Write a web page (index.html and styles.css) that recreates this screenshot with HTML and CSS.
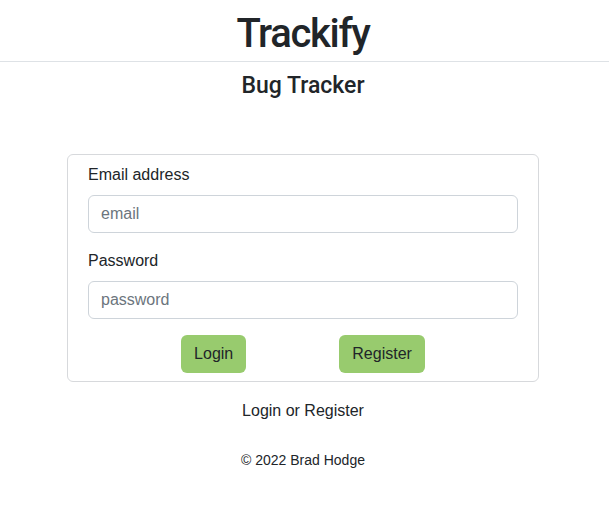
FILE: index.html
```html
<!DOCTYPE html>
<html lang="en">
<head>
<meta charset="utf-8">
<title>Trackify</title>
<link rel="stylesheet" href="styles.css">
</head>
<body>
<header class="site-header">
  <h1 class="brand">Trackify</h1>
</header>
<main class="main">
  <h4 class="subtitle">Bug Tracker</h4>
  <form class="card">
    <div class="field">
      <label class="label" for="email">Email address</label>
      <input class="input" id="email" type="email" placeholder="email">
    </div>
    <div class="field">
      <label class="label" for="password">Password</label>
      <input class="input" id="password" type="password" placeholder="password">
    </div>
    <div class="actions">
      <button class="btn" type="button">Login</button>
      <button class="btn" type="button">Register</button>
    </div>
  </form>
  <p class="switch">Login or Register</p>
  <footer class="footer">© 2022 Brad Hodge</footer>
</main>
</body>
</html>
```
FILE: styles.css
```css
* { box-sizing: border-box; }
html, body {
  margin: 0;
  padding: 0;
  background: #fff;
  color: #212529;
  font-family: "Liberation Sans", Arial, Helvetica, sans-serif;
  font-size: 16px;
  line-height: 1.5;
}
.site-header {
  padding: 10px 3px 3px 0;
  border-bottom: 1px solid #dee2e6;
  text-align: center;
}
.brand {
  margin: 0;
  font-family: Roboto, "Liberation Sans", sans-serif;
  font-size: 40px;
  font-weight: 500;
  line-height: 48px;
  letter-spacing: -1.3px;
}
.main {
  display: flex;
  flex-direction: column;
  align-items: center;
  padding-right: 3px;
}
.subtitle {
  margin: 11px 0 0;
  font-family: Roboto, "Liberation Sans", sans-serif;
  font-size: 23px;
  font-weight: 500;
  line-height: 26px;
}
.card {
  width: 472px;
  margin-top: 55px;
  padding: 8px 20px 8px;
  border: 1px solid #d7d9dc;
  border-radius: 6px;
  display: flex;
  flex-direction: column;
}
.field {
  display: flex;
  flex-direction: column;
  margin-bottom: 16px;
}
.label {
  margin-bottom: 8px;
  line-height: 24px;
  padding-top: 1px;
  margin-top: -1px;
}
.input {
  height: 38px;
  padding: 6px 12px;
  border: 1px solid #ced4da;
  border-radius: 6px;
  font: inherit;
  color: #212529;
  background: #fff;
}
.input::placeholder { color: #6c757d; }
.actions {
  display: flex;
  justify-content: space-evenly;
}
.btn {
  height: 38px;
  padding: 6px 13px;
  border: none;
  border-radius: 6px;
  background: #98cb6e;
  color: #212529;
  font: inherit;
  line-height: 24px;
}
.switch {
  margin: 17px 0 0;
  line-height: 24px;
}
.footer {
  margin-top: 27px;
  font-size: 14px;
  line-height: 21px;
}
```
